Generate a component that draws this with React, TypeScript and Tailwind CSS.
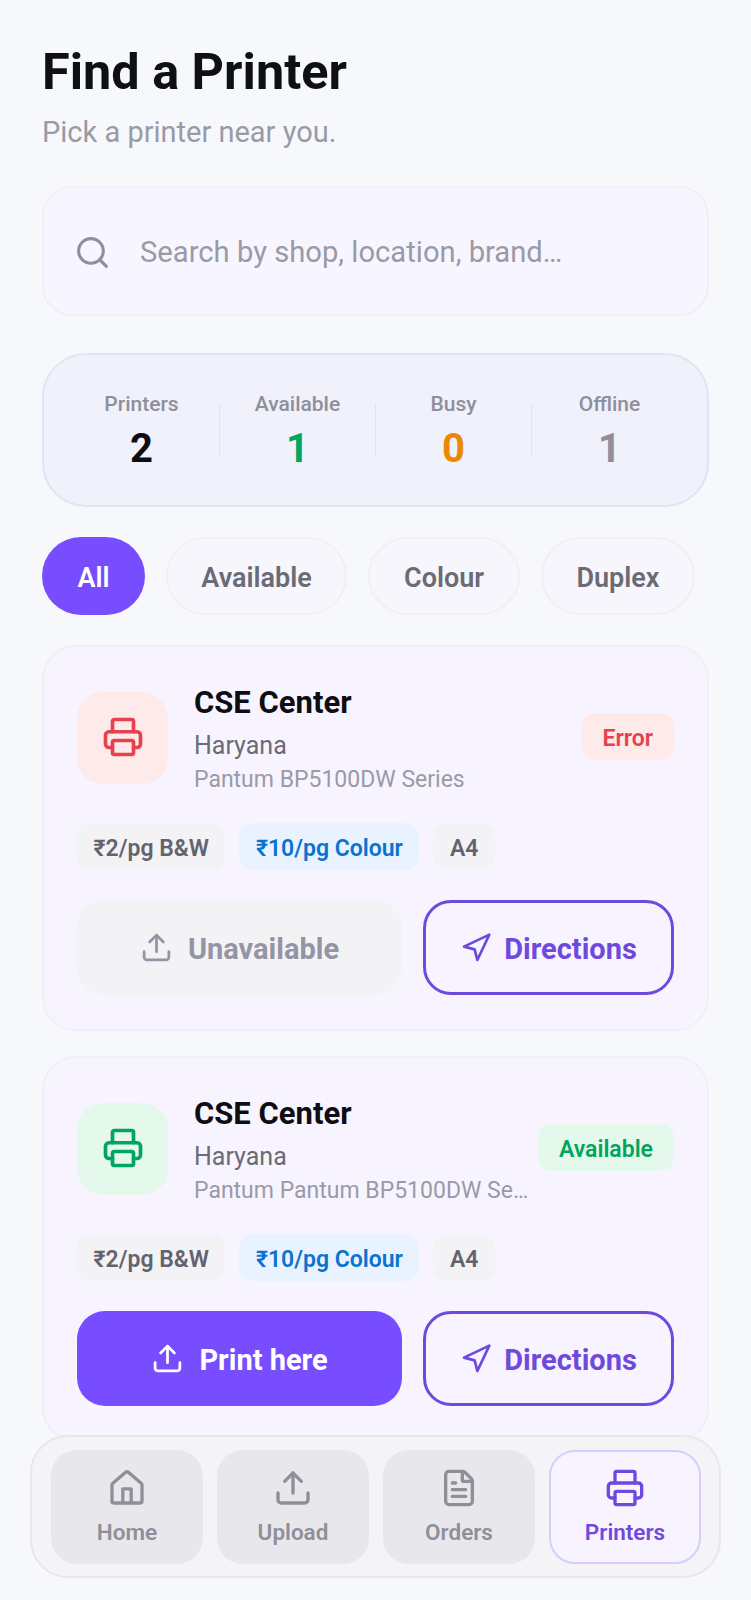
import React from "react";
import { Search, Printer, Upload, Navigation, FileText } from "lucide-react";

const font = "font-['Roboto',sans-serif]";

function HomeIcon() {
  return (
    <svg width="40" height="40" viewBox="0 0 24 24" fill="none" stroke="currentColor" strokeWidth="2" strokeLinecap="round" strokeLinejoin="round">
      <path d="M3 10.2a1.5 1.5 0 0 1 .5-1.1l7.5-6.4a1.5 1.5 0 0 1 2 0l7.5 6.4a1.5 1.5 0 0 1 .5 1.1V20a1 1 0 0 1-1 1H4a1 1 0 0 1-1-1z" />
      <path d="M9.5 21v-8.5h5V21" />
    </svg>
  );
}

function Tag({ children, blue }: { children: React.ReactNode; blue?: boolean }) {
  return (
    <span className={`flex h-[47px] items-center rounded-[14px] px-[16.5px] pt-[5px] text-[23px] font-semibold ${blue ? "bg-[#e8f3ff] text-[#0a72d0]" : "bg-[#f3f3f6] text-[#63636e]"}`}>
      {children}
    </span>
  );
}

function Card({ error }: { error?: boolean }) {
  return (
    <div className="flex h-[386px] shrink-0 flex-col rounded-[34px] border-2 border-[#f0eff6] bg-[#f7f4ff] px-[33px] pt-[38px]">
      <div className="flex items-start">
        <div className={`mt-[7px] flex h-[92px] w-[91px] shrink-0 items-center justify-center rounded-[26px] ${error ? "bg-[#ffeaea] text-[#e5414f]" : "bg-[#e5f8ec] text-[#00a560]"}`}>
          <Printer size={42} strokeWidth={2.1} className="-mt-[2px]" />
        </div>
        <div className="ml-[26px] min-w-0 flex-1">
          <div className="text-[31px] leading-[36px] font-bold text-[#0d0d12]">CSE Center</div>
          <div className="mt-[10px] text-[25px] leading-[30px] text-[#6b6b76]">Haryana</div>
          <div className="mt-[3.5px] truncate text-[23px] leading-[30px] text-[#9a9aa6]">
            {error ? "Pantum BP5100DW Series" : "Pantum Pantum BP5100DW Series"}
          </div>
        </div>
        <span className={`mt-[28px] ml-[6px] flex h-[47px] shrink-0 items-center rounded-[14px] px-[21px] pt-[5px] text-[23px] font-semibold ${error ? "bg-[#ffeaea] text-[#e5414f]" : "bg-[#e5f8ec] text-[#00a560]"}`}>
          {error ? "Error" : "Available"}
        </span>
      </div>
      <div className="mt-[28.5px] flex gap-[14px]">
        <Tag>₹2/pg B&amp;W</Tag>
        <Tag blue>₹10/pg Colour</Tag>
        <Tag>A4</Tag>
      </div>
      <div className="mt-[30px] flex gap-[21px]">
        <div className={`flex h-[95px] w-[325px] items-center justify-center gap-[15px] rounded-[28px] text-[29px] font-bold ${error ? "bg-[#f3f3f6] text-[#9494a4]" : "bg-[#774dff] text-white"}`}>
          <Upload size={33} strokeWidth={2} />
          <span className="pt-[4px]">{error ? "Unavailable" : "Print here"}</span>
        </div>
        <div className="flex h-[95px] w-[251px] items-center justify-center gap-[12px] rounded-[28px] border-[3px] border-[#6f49dd] text-[29px] font-bold text-[#6f49dd]">
          <Navigation size={32} strokeWidth={2} />
          <span className="pt-[4px]">Directions</span>
        </div>
      </div>
    </div>
  );
}

function Stat({ label, value, color, line }: { label: string; value: string; color: string; line?: boolean }) {
  return (
    <div className={`flex h-[54px] flex-1 flex-col items-center justify-start ${line ? "border-r border-[#e3e3f2]" : ""}`}>
      <div className="-mt-[11px] text-[21px] leading-[24px] font-medium text-[#8f8f9c]">{label}</div>
      <div className={`mt-[12px] text-[40px] leading-[42px] font-bold ${color}`}>{value}</div>
    </div>
  );
}

function Chip({ children, w, active }: { children: React.ReactNode; w: string; active?: boolean }) {
  return (
    <div className={`flex h-[78px] shrink-0 items-center justify-center rounded-[39px] pt-[4px] text-[27px] font-semibold ${w} ${active ? "bg-[#774dff] text-white" : "border-2 border-[#f0eff6] bg-[#f7f6fc] text-[#6b6b76]"}`}>
      {children}
    </div>
  );
}

function NavItem({ icon, label, active }: { icon: React.ReactNode; label: string; active?: boolean }) {
  return (
    <div className={`flex h-[114px] w-[152px] shrink-0 flex-col items-center justify-center gap-[11px] rounded-[26px] text-[22.5px] font-semibold ${active ? "border-2 border-[#d9ccfa] bg-[#f7f4ff] text-[#6f49dd]" : "bg-[#e8e8ec] text-[#8f8f9a]"}`}>
      {icon}
      <span className="leading-[26px]">{label}</span>
    </div>
  );
}

export default function App() {
  return (
    <div className={`relative h-[1600px] w-[751px] overflow-hidden bg-[#f6f8fc] ${font}`}>
      <div className="flex flex-col px-[42px]">
        <h1 className="mt-[42px] text-[50.4px] leading-[60px] font-bold text-[#0f1015]">Find a Printer</h1>
        <p className="mt-[12px] text-[29px] leading-[36px] text-[#9a9aa6]">Pick a printer near you.</p>
        <div className="mt-[36px] flex h-[130px] items-center rounded-[30px] border-2 border-[#f0eff6] bg-[#f7f5ff] pt-[3px] pl-[30px]">
          <Search size={37} strokeWidth={2} className="text-[#8f8f9a]" />
          <span className="ml-[29px] text-[29.2px] text-[#9a9aa6]">Search by shop, location, brand…</span>
        </div>
        <div className="mt-[37px] flex h-[154px] items-center rounded-[44px] border-2 border-[#e3e3f5] bg-[#f0f1fa] px-[20px]">
          <Stat label="Printers" value="2" color="text-[#0d0d12]" line />
          <Stat label="Available" value="1" color="text-[#00a560]" line />
          <Stat label="Busy" value="0" color="text-[#e88a00]" line />
          <Stat label="Offline" value="1" color="text-[#8f8f9a]" />
        </div>
        <div className="mt-[30px] flex gap-[21px]">
          <Chip w="w-[103px]" active>All</Chip>
          <Chip w="w-[181px]">Available</Chip>
          <Chip w="w-[152px]">Colour</Chip>
          <Chip w="w-[154px]">Duplex</Chip>
        </div>
        <div className="mt-[30px] flex flex-col gap-[25px]">
          <Card error />
          <Card />
        </div>
      </div>
      <div className="absolute top-[1435px] left-[30px] flex h-[143px] w-[691px] items-center gap-[14px] rounded-[38px] border-2 border-[#e8e8ec] bg-[#f4f4f6] pl-[19px]">
        <NavItem icon={<HomeIcon />} label="Home" />
        <NavItem icon={<Upload size={40} strokeWidth={2} />} label="Upload" />
        <NavItem icon={<FileText size={40} strokeWidth={2} />} label="Orders" />
        <NavItem icon={<Printer size={40} strokeWidth={2} />} label="Printers" active />
      </div>
    </div>
  );
}
